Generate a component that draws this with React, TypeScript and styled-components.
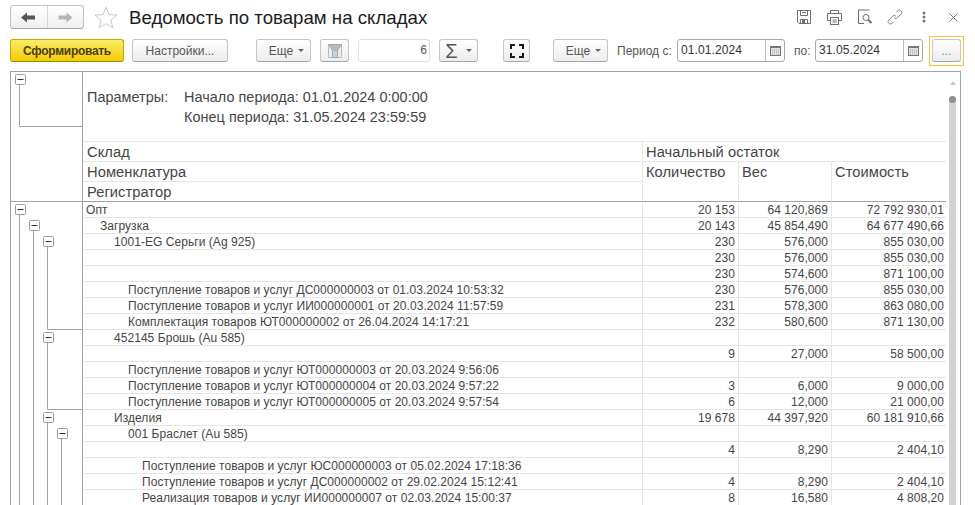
import React from "react";
import styled, { createGlobalStyle } from "styled-components";

const GlobalStyle = createGlobalStyle`
  html, body {
    margin: 0;
    padding: 0;
    background: #fff;
    font-family: "Liberation Sans", Arial, sans-serif;
    color: #4b4b4b;
    overflow: hidden;
  }
  *, *:before, *:after {
    box-sizing: border-box;
  }
`;

type RowData = {
  name?: string;
  level?: number;
  qty?: string;
  weight?: string;
  cost?: string;
};

const doc = (n: string, rest: string) => `Поступление товаров и услуг ${n} от ${rest}`;

const rows: RowData[] = [
  { name: "Опт", level: 0, qty: "20 153", weight: "64 120,869", cost: "72 792 930,01" },
  { name: "Загрузка", level: 1, qty: "20 143", weight: "45 854,490", cost: "64 677 490,66" },
  { name: "1001-EG Серьги (Ag 925)", level: 2, qty: "230", weight: "576,000", cost: "855 030,00" },
  { qty: "230", weight: "576,000", cost: "855 030,00" },
  { qty: "230", weight: "574,600", cost: "871 100,00" },
  { name: doc("ДС000000003", "01.03.2024 10:53:32"), level: 3, qty: "230", weight: "576,000", cost: "855 030,00" },
  { name: doc("ИИ000000001", "20.03.2024 11:57:59"), level: 3, qty: "231", weight: "578,300", cost: "863 080,00" },
  { name: "Комплектация товаров ЮТ000000002 от 26.04.2024 14:17:21", level: 3, qty: "232", weight: "580,600", cost: "871 130,00" },
  { name: "452145 Брошь (Au 585)", level: 2 },
  { qty: "9", weight: "27,000", cost: "58 500,00" },
  { name: doc("ЮТ000000003", "20.03.2024 9:56:06"), level: 3 },
  { name: doc("ЮТ000000004", "20.03.2024 9:57:22"), level: 3, qty: "3", weight: "6,000", cost: "9 000,00" },
  { name: doc("ЮТ000000005", "20.03.2024 9:57:54"), level: 3, qty: "6", weight: "12,000", cost: "21 000,00" },
  { name: "Изделия", level: 2, qty: "19 678", weight: "44 397,920", cost: "60 181 910,66" },
  { name: "001 Браслет (Au 585)", level: 3 },
  { qty: "4", weight: "8,290", cost: "2 404,10" },
  { name: doc("ЮС000000003", "05.02.2024 17:18:36"), level: 4 },
  { name: doc("ДС000000002", "29.02.2024 15:12:41"), level: 4, qty: "4", weight: "8,290", cost: "2 404,10" },
  { name: "Реализация товаров и услуг ИИ000000007 от 02.03.2024 15:00:37", level: 4, qty: "8", weight: "16,580", cost: "4 808,20" },
];

const Page = styled.div`
  width: 975px;
  height: 505px;
  overflow: hidden;
  padding: 5px 0 0 10px;
`;

const TitleBar = styled.div`
  display: flex;
  align-items: center;
  height: 24px;
`;

const NavGroup = styled.div`
  display: flex;
  width: 74px;
  height: 24px;
  border: 1px solid #c4c4c4;
  border-bottom-color: #a6a6a6;
  border-radius: 3px;
  background: linear-gradient(#ffffff, #efefef);
`;

const NavButton = styled.div<{ $divider?: boolean }>`
  flex: 1;
  display: flex;
  align-items: center;
  justify-content: center;
  border-left: ${(p) => (p.$divider ? "1px solid #d6d6d6" : "none")};
`;

const StarWrap = styled.div`
  display: flex;
  margin-left: 10px;
`;

const Title = styled.h1`
  margin: 0 0 0 11px;
  padding-top: 2px;
  font-size: 18.67px;
  font-weight: 400;
  color: #1c1c1c;
  white-space: nowrap;
`;

const TitleIcons = styled.div`
  margin-left: auto;
  margin-right: 13px;
  display: flex;
  align-items: center;
  height: 24px;
  gap: 14px;
`;

const IconSlot = styled.div<{ $w: number }>`
  display: flex;
  justify-content: center;
  width: ${(p) => p.$w}px;
`;

const Toolbar = styled.div`
  display: flex;
  align-items: center;
  height: 23px;
  margin-top: 10px;
  font-size: 12px;
`;

const Button = styled.div<{ $w: number; $ml?: number; $pl?: number; $gap?: number; $muted?: boolean }>`
  display: flex;
  align-items: center;
  justify-content: center;
  flex: none;
  gap: ${(p) => p.$gap ?? 5}px;
  width: ${(p) => p.$w}px;
  height: 23px;
  margin-left: ${(p) => p.$ml ?? 0}px;
  padding-left: ${(p) => p.$pl ?? 0}px;
  border: 1px solid #c6c6c6;
  border-bottom-color: #a8a8a8;
  border-radius: 3px;
  background: linear-gradient(#ffffff, #ececec);
  color: ${(p) => (p.$muted ? "#8a8a8a" : "#555")};
  white-space: nowrap;
`;

const PrimaryButton = styled(Button)`
  border-color: #c4a900;
  border-bottom-color: #a38c00;
  background: linear-gradient(#fdec6a, #f2cb00);
  color: #4d4000;
  font-weight: 700;
  letter-spacing: -0.3px;
`;

const Caret = styled.span`
  width: 0;
  height: 0;
  border-left: 3px solid transparent;
  border-right: 3px solid transparent;
  border-top: 3px solid #666;
`;

const Sigma = styled.span`
  font-size: 20px;
  line-height: 20px;
  color: #555;
`;

const NumberField = styled.div`
  width: 72px;
  height: 23px;
  margin-left: 9px;
  flex: none;
  border: 1px solid #dedede;
  border-radius: 3px;
  padding: 0 2px;
  font-size: 12px;
  line-height: 21px;
  text-align: right;
  color: #555;
`;

const Label = styled.span<{ $ml: number; $w: number }>`
  flex: none;
  width: ${(p) => p.$w}px;
  margin-left: ${(p) => p.$ml}px;
  font-size: 12px;
  color: #555;
  white-space: nowrap;
`;

const DateField = styled.div`
  display: flex;
  flex: none;
  width: 108px;
  height: 23px;
  border: 1px solid #a8a8a8;
  border-radius: 3px;
  font-size: 12px;
  color: #333;
  overflow: hidden;
`;

const DateValue = styled.div`
  flex: 1;
  padding-left: 3px;
  line-height: 21px;
  letter-spacing: 0.1px;
`;

const DateButton = styled.div`
  display: flex;
  align-items: center;
  justify-content: center;
  width: 19px;
  border-left: 1px solid #bcbcbc;
`;

const FocusRing = styled.div`
  flex: none;
  display: flex;
  align-items: center;
  justify-content: center;
  width: 35px;
  height: 30px;
  margin-left: 6px;
  border: 1px solid #f3c531;
`;

const Report = styled.div`
  position: relative;
  width: 951px;
  height: 440px;
  margin-top: 9px;
  border: 1px solid #a3a3a3;
  border-bottom: none;
  display: flex;
  overflow: hidden;
`;

const Gutter = styled.svg`
  flex: none;
  width: 72px;
  height: 439px;
  display: block;
`;

const Sheet = styled.table`
  flex: none;
  width: 863px;
  height: 0;
  border-collapse: separate;
  border-spacing: 0;
  table-layout: fixed;
  font-size: 12px;
  letter-spacing: 0.05px;
  color: #454545;
`;

const ParamsCell = styled.td`
  height: 70px;
  padding: 15px 0 0 4px;
  border-bottom: 1px solid #e6e6e6;
  vertical-align: top;
`;

const Params = styled.div`
  display: grid;
  grid-template-columns: 97px auto;
  grid-auto-rows: 20px;
  font-size: 14.4px;
  line-height: 20px;
`;

const HeadCell = styled.td<{ $heavy?: boolean; $split?: boolean }>`
  height: 20px;
  padding: 2px 3px 0 ${(p) => (p.$split ? 3 : 4)}px;
  font-size: 14.7px;
  line-height: 17px;
  vertical-align: top;
  white-space: nowrap;
  border-bottom: 1px solid ${(p) => (p.$heavy ? "#a3a3a3" : "#e6e6e6")};
  border-left: ${(p) => (p.$split ? "1px solid #e6e6e6" : "none")};
`;

const NameCell = styled.td<{ $level: number }>`
  height: 16px;
  padding: 2px 0 0 ${(p) => 3 + p.$level * 14}px;
  line-height: 13px;
  white-space: nowrap;
  border-bottom: 1px solid #e6e6e6;
`;

const NumCell = styled.td<{ $end?: boolean }>`
  height: 16px;
  padding: 2px ${(p) => (p.$end ? 2 : 3)}px 0 0;
  line-height: 13px;
  text-align: right;
  white-space: nowrap;
  border-left: 1px solid #e6e6e6;
  border-bottom: 1px solid #e6e6e6;
`;

const ScrollTrack = styled.div`
  position: absolute;
  top: 24px;
  left: 938px;
  width: 7px;
  bottom: 0;
  background: #d2d2d2;
  border-radius: 4px 4px 0 0;
`;

const ScrollThumb = styled.div`
  position: absolute;
  top: 0;
  left: 0;
  width: 7px;
  height: 7px;
  border-radius: 50%;
  background: #8f8f8f;
`;

const ScrollUp = styled.div`
  position: absolute;
  top: 9px;
  left: 939px;
  width: 0;
  height: 0;
  border-left: 3px solid transparent;
  border-right: 3px solid transparent;
  border-bottom: 4px solid #c8c8c8;
`;

const BackArrow = ({ color }: { color: string }) => (
  <svg width="15" height="11" viewBox="0 0 15 11">
    <path d="M0 5.5 6 0.5V3.5H14V7.5H6V10.5Z" fill={color} />
  </svg>
);

const ForwardArrow = ({ color }: { color: string }) => (
  <svg width="15" height="11" viewBox="0 0 15 11">
    <path d="M14.5 5.5 8.5 0.5V3.5H0.5V7.5H8.5V10.5Z" fill={color} />
  </svg>
);

const Star = () => (
  <svg width="24" height="23" viewBox="0 0 24 23">
    <path
      d="M12 1.2 15 8.6 23 9.1 16.8 14.1 18.9 21.9 12 17.6 5.1 21.9 7.2 14.1 1 9.1 9 8.6Z"
      fill="#fff"
      stroke="#c9c9c9"
    />
  </svg>
);

const SaveIcon = () => (
  <svg width="16" height="16" viewBox="0 0 16 16" fill="none" stroke="#6e6e6e">
    <path d="M1.5 1.5H14.5V14.5H3L1.5 13Z" />
    <path d="M4.5 1.5V6.5H11.5V1.5M6 3.5H10" />
    <path d="M4.5 14.5V10.5H11.5V14.5" />
    <rect x="6" y="11" width="3" height="3.5" fill="#6e6e6e" stroke="none" />
  </svg>
);

const PrintIcon = () => (
  <svg width="17" height="16" viewBox="0 0 17 16" fill="none" stroke="#6e6e6e">
    <path d="M4.5 4.5V1.5H12.5V4.5" />
    <path d="M4 11.5H1.5V4.5H15.5V11.5H13" />
    <rect x="4.5" y="8.5" width="8" height="7" fill="#fff" />
    <path d="M6.5 11H10.5M6.5 13H10.5" />
  </svg>
);

const PreviewIcon = () => (
  <svg width="16" height="16" viewBox="0 0 16 16" fill="none" stroke="#6e6e6e">
    <path d="M12.5 1 H1.5 V14.5 H7" />
    <circle cx="9" cy="8.5" r="3" />
    <path d="M11.2 10.7 14.5 14" strokeWidth="2" />
  </svg>
);

const LinkIcon = () => (
  <svg width="16" height="16" viewBox="0 0 16 16" fill="none" stroke="#7a7a7a">
    <path d="M9.5 3 11 1.7C12 .8 13.3 .9 14.2 1.8 15.1 2.8 15.1 4.1 14.2 5L10.3 8.9C9.4 9.8 8.1 9.7 7.2 8.8" />
    <path d="M6.5 13 5 14.3C4 15.2 2.7 15.1 1.8 14.2 .9 13.2 .9 11.9 1.8 11L5.7 7.1C6.6 6.2 7.9 6.3 8.8 7.2" />
  </svg>
);

const DotsIcon = () => (
  <svg width="4" height="12" viewBox="0 0 4 12" fill="#777">
    <circle cx="2" cy="2" r="1.5" />
    <circle cx="2" cy="6" r="1.5" />
    <circle cx="2" cy="10" r="1.5" />
  </svg>
);

const CloseIcon = () => (
  <svg width="9" height="9" viewBox="0 0 9 9" stroke="#777">
    <path d="M.5 .5 8.5 8.5M8.5 .5 .5 8.5" />
  </svg>
);

const FilterIcon = () => (
  <svg width="16" height="15" viewBox="0 0 16 15">
    <path d="M1.5 1.5H14.5V14.5H1.5Z" fill="#e9edef" stroke="#b4babe" />
    <path d="M1.5 1.5H14.5L10.5 7V14.5H5.5V7Z" fill="#b3bcc1" stroke="#a0a8ad" />
    <path d="M7 8V14M9 8V14" stroke="#dfe5e8" />
  </svg>
);

const ExpandIcon = () => (
  <svg width="14" height="14" viewBox="0 0 14 14" fill="none" stroke="#1a1a1a" strokeWidth="2">
    <path d="M1 5V1H5M9 1H13V5M13 9V13H9M5 13H1V9" />
  </svg>
);

const CalendarIcon = () => (
  <svg width="11" height="11" viewBox="0 0 11 11">
    <rect x=".5" y="1.5" width="10" height="9" fill="#e4e4e0" stroke="#777" />
    <rect x="1" y="1" width="9" height="2" fill="#777" />
    <path d="M2 5H9M2 7H9M2 9H9" stroke="#a0a0a0" strokeDasharray="1 1" />
  </svg>
);

// +/- boxes and the guide lines of the report groups
const Toggle = ({ x, y }: { x: number; y: number }) => (
  <g>
    <rect x={x - 4} y={y - 5} width="10" height="10" rx="1" fill="#fff" stroke="#9c9c9c" />
    <path d={`M${x - 2} ${y}H${x + 4}`} stroke="#333" />
  </g>
);

const TreeGutter = () => {
  // svg starts at x=11, y=72 of the page
  const px = (v: number) => v - 10.5;
  const py = (v: number) => v - 71.5;
  const v = (x: number, a: number, b: number) => `M${px(x)} ${py(a)}V${py(b)}`;
  const h = (x: number) => `H${px(x)}`;
  const d = [
    v(19, 84, 126) + h(83),
    v(19, 214, 506),
    v(33, 230, 506),
    v(47, 246, 329) + h(83),
    v(47, 342, 409) + h(83),
    v(47, 422, 506),
    v(61, 438, 506),
  ].join(" ");
  return (
    <Gutter viewBox="0 0 72 439">
      <path d={d} fill="none" stroke="#a3a3a3" />
      <path d={`M0 ${py(201)}H72`} stroke="#a3a3a3" />
      <path d={`M71.5 0V439`} stroke="#a3a3a3" />
      <Toggle x={px(19)} y={py(79)} />
      <Toggle x={px(19)} y={py(209)} />
      <Toggle x={px(33)} y={py(225)} />
      <Toggle x={px(47)} y={py(241)} />
      <Toggle x={px(47)} y={py(337)} />
      <Toggle x={px(47)} y={py(417)} />
      <Toggle x={px(61)} y={py(433)} />
    </Gutter>
  );
};

export default function App() {
  return (
    <>
      <GlobalStyle />
      <Page>
        <TitleBar>
          <NavGroup>
            <NavButton>
              <BackArrow color="#555" />
            </NavButton>
            <NavButton $divider>
              <ForwardArrow color="#b5b5b5" />
            </NavButton>
          </NavGroup>
          <StarWrap>
            <Star />
          </StarWrap>
          <Title>Ведомость по товарам на складах</Title>
          <TitleIcons>
            <IconSlot $w={16}><SaveIcon /></IconSlot>
            <IconSlot $w={17}><PrintIcon /></IconSlot>
            <IconSlot $w={16}><PreviewIcon /></IconSlot>
            <IconSlot $w={16}><LinkIcon /></IconSlot>
            <IconSlot $w={13}><DotsIcon /></IconSlot>
            <IconSlot $w={18}><CloseIcon /></IconSlot>
          </TitleIcons>
        </TitleBar>
        <Toolbar>
          <PrimaryButton $w={114}>Сформировать</PrimaryButton>
          <Button $w={96} $ml={8}>Настройки...</Button>
          <Button $w={55} $ml={28} $pl={6}>Еще <Caret /></Button>
          <Button $w={29} $ml={9}><FilterIcon /></Button>
          <NumberField>6</NumberField>
          <Button $w={39} $ml={9} $gap={8}><Sigma>Σ</Sigma> <Caret /></Button>
          <Button $w={27} $ml={25}><ExpandIcon /></Button>
          <Button $w={55} $ml={23} $pl={6}>Еще <Caret /></Button>
          <Label $ml={9} $w={60}>Период с:</Label>
          <DateField>
            <DateValue>01.01.2024</DateValue>
            <DateButton><CalendarIcon /></DateButton>
          </DateField>
          <Label $ml={9} $w={21}>по:</Label>
          <DateField>
            <DateValue>31.05.2024</DateValue>
            <DateButton><CalendarIcon /></DateButton>
          </DateField>
          <FocusRing>
            <Button $w={29} $muted>...</Button>
          </FocusRing>
        </Toolbar>
        <Report>
          <TreeGutter />
          <Sheet>
            <colgroup>
              <col style={{ width: 559 }} />
              <col style={{ width: 96 }} />
              <col style={{ width: 93 }} />
              <col style={{ width: 115 }} />
            </colgroup>
            <tbody>
              <tr>
                <ParamsCell colSpan={4}>
                  <Params>
                    <span>Параметры:</span>
                    <span>Начало периода: 01.01.2024 0:00:00</span>
                    <span />
                    <span>Конец периода: 31.05.2024 23:59:59</span>
                  </Params>
                </ParamsCell>
              </tr>
              <tr>
                <HeadCell>Склад</HeadCell>
                <HeadCell $split colSpan={3}>Начальный остаток</HeadCell>
              </tr>
              <tr>
                <HeadCell>Номенклатура</HeadCell>
                <HeadCell $split $heavy rowSpan={2}>Количество</HeadCell>
                <HeadCell $split $heavy rowSpan={2}>Вес</HeadCell>
                <HeadCell $split $heavy rowSpan={2}>Стоимость</HeadCell>
              </tr>
              <tr>
                <HeadCell $heavy>Регистратор</HeadCell>
              </tr>
              {rows.map((r, i) => (
                <tr key={i}>
                  <NameCell $level={r.level ?? 0}>{r.name}</NameCell>
                  <NumCell>{r.qty}</NumCell>
                  <NumCell>{r.weight}</NumCell>
                  <NumCell $end>{r.cost}</NumCell>
                </tr>
              ))}
            </tbody>
          </Sheet>
          <ScrollUp />
          <ScrollTrack>
            <ScrollThumb />
          </ScrollTrack>
        </Report>
      </Page>
    </>
  );
}
